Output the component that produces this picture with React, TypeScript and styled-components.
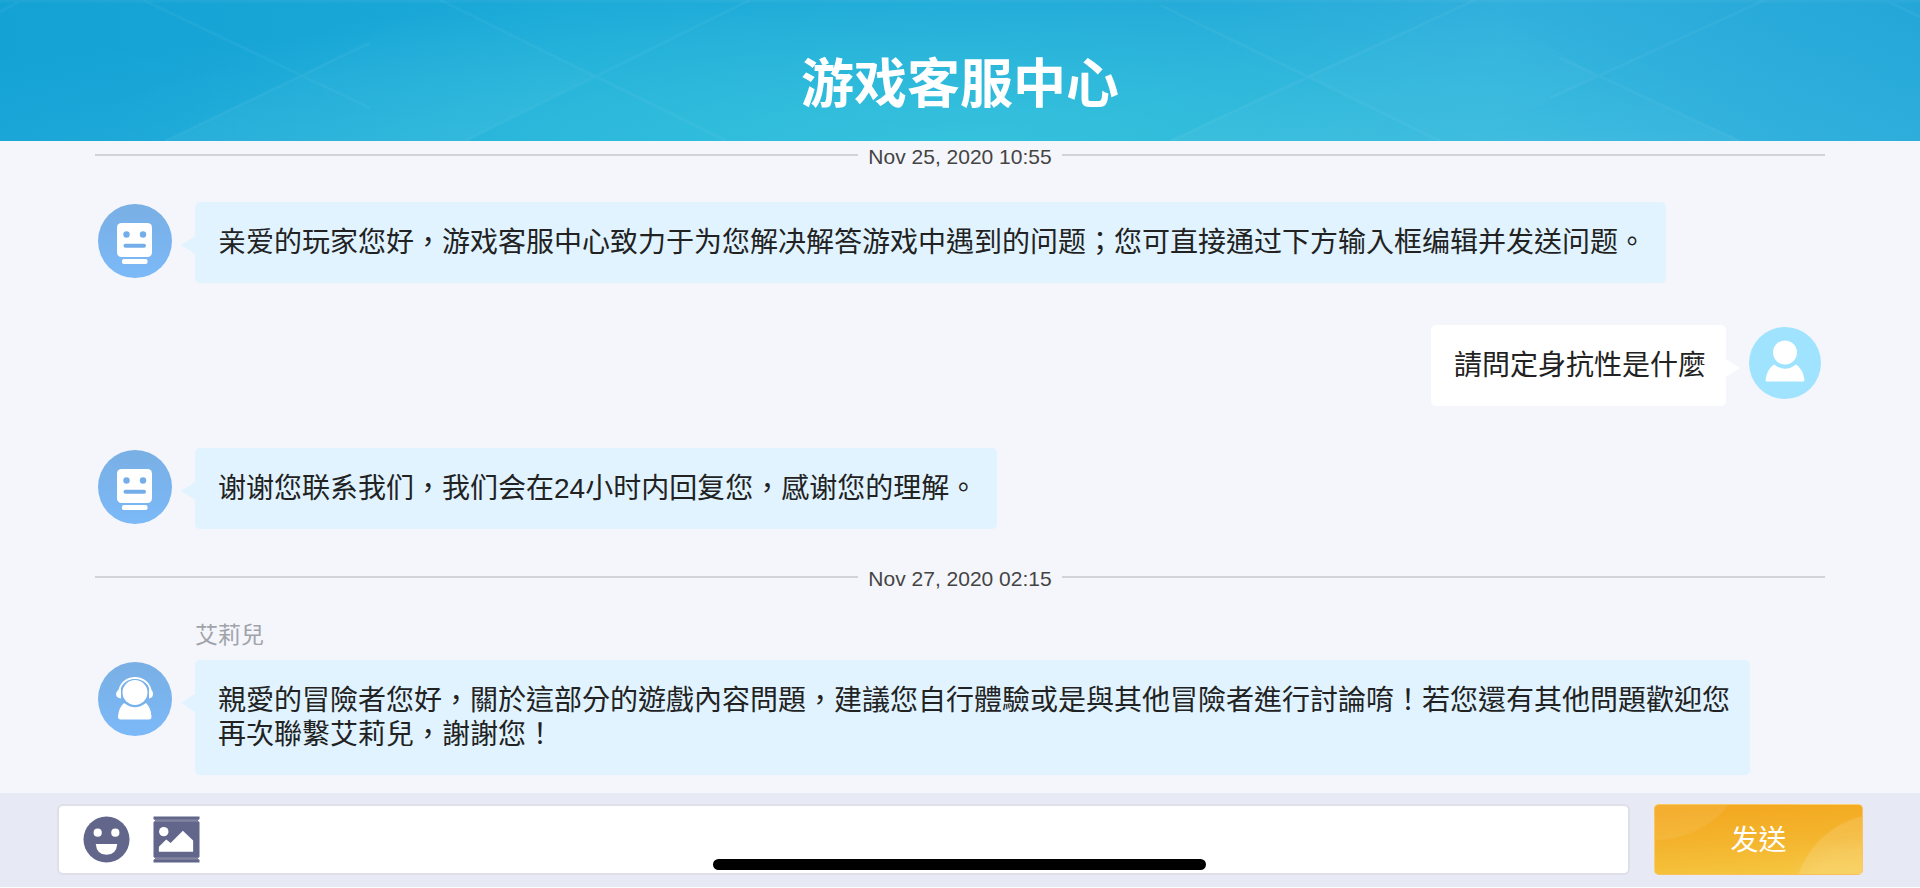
import React from "react";
import styled, { createGlobalStyle } from "styled-components";

const GlobalStyle = createGlobalStyle`
  *, *::before, *::after { box-sizing: border-box; }
  body {
    margin: 0;
    background: #f5f6fb;
    color: #222;
    font-family: "Liberation Sans", "Noto Sans CJK TC", sans-serif;
  }
`;

const Page = styled.div`
  display: flex;
  flex-direction: column;
  min-height: 100vh;
`;

const Header = styled.header`
  position: relative;
  display: flex;
  align-items: center;
  justify-content: center;
  height: 141px;
  padding-top: 18px;
  overflow: hidden;
  background:
    radial-gradient(ellipse 45% 120% at 50% 100%, rgba(54, 196, 220, 0.9), rgba(54, 196, 220, 0) 100%),
    linear-gradient(176deg, rgba(255, 255, 255, 0) 20%, rgba(90, 205, 235, 0.25) 100%),
    linear-gradient(90deg, #14a2d5 0%, #1ba9d8 30%, #20a6d8 62%, #2eaedc 78%, #1ea3d6 100%);
`;

const Facets = styled.svg`
  position: absolute;
  inset: 0;
  width: 100%;
  height: 100%;
`;

const Title = styled.h1`
  position: relative;
  margin: 0;
  color: #fff;
  font-family: "Noto Sans CJK SC", sans-serif;
  font-size: 53px;
  font-weight: 700;
  line-height: 64px;
`;

const Chat = styled.main`
  flex: 1;
  padding: 0 95px 18px;
`;

const Divider = styled.div`
  display: flex;
  align-items: center;
  gap: 10px;
  height: 28px;

  &::before,
  &::after {
    content: "";
    flex: 1;
    height: 2px;
    background: #d2d3d8;
  }
`;

const Time = styled.time`
  padding-top: 3px;
  color: #444;
  font-size: 21px;
  line-height: 28px;
`;

const Messages = styled.ul`
  display: flex;
  flex-direction: column;
  gap: 42px;
  margin: 0;
  padding: 33px 0 34px;
  list-style: none;

  &:last-child {
    padding: 27px 0 0;
  }
`;

const Row = styled.li<{ $mine?: boolean }>`
  display: flex;
  flex-direction: ${(p) => (p.$mine ? "row-reverse" : "row")};
  align-items: flex-start;
  gap: 23px;
  padding: ${(p) => (p.$mine ? "0 4px 0 75px" : "0 75px 0 3px")};
`;

const Avatar = styled.svg<{ $size: number }>`
  flex: none;
  width: ${(p) => p.$size}px;
  height: ${(p) => p.$size}px;
  margin-top: 2px;
`;

const Sender = styled.div`
  margin: 0 0 8px 100px;
  color: #a0a3aa;
  font-size: 23px;
  line-height: 34px;
`;

const Bubble = styled.p<{ $mine?: boolean }>`
  position: relative;
  margin: 0;
  padding: 24px 20px 23px 23px;
  border-radius: 5px;
  background: ${(p) => (p.$mine ? "#fff" : "#e0f3ff")};
  font-size: 28px;
  line-height: 34px;

  &::before {
    content: "";
    position: absolute;
    top: 34px;
    ${(p) => (p.$mine ? "left: 100%" : "right: 100%")};
    width: 14px;
    height: 18px;
    background: inherit;
    clip-path: ${(p) =>
      p.$mine ? "polygon(0 0, 100% 50%, 0 100%)" : "polygon(100% 0, 0 50%, 100% 100%)"};
  }
`;

const Composer = styled.form`
  position: relative;
  display: flex;
  gap: 24px;
  padding: 11px 57px 12px;
  border-bottom: 1px solid #fdfdff;
  background: #e7e9f5;
`;

const Field = styled.div`
  display: flex;
  flex: 1;
  align-items: center;
  gap: 23px;
  height: 71px;
  padding: 0 24px 1px;
  border: 2px solid #dedfe8;
  border-radius: 6px;
  background: #fff;
`;

const IconButton = styled.button`
  display: block;
  width: 47px;
  height: 47px;
  padding: 0;
  border: 0;
  background: none;
  cursor: pointer;

  svg {
    display: block;
    width: 100%;
    height: 100%;
  }
`;

const TextInput = styled.input`
  flex: 1;
  min-width: 0;
  height: 100%;
  padding: 0;
  border: 0;
  outline: 0;
  background: none;
  font: inherit;
  font-size: 28px;
`;

const SendButton = styled.button`
  width: 209px;
  height: 71px;
  padding: 0 0 4px;
  border: 1px solid rgba(255, 205, 120, 0.6);
  border-radius: 5px;
  background:
    radial-gradient(ellipse 76px 42px at 100% 105%, rgba(255, 255, 255, 0.07) 60%, transparent 100%),
    radial-gradient(circle 90px at 228px 98px, rgba(255, 255, 255, 0.13) 98%, transparent 100%),
    radial-gradient(circle 96px at 0 -60px, rgba(255, 255, 255, 0.07) 98%, transparent 100%),
    linear-gradient(176deg, #f3a921 10%, #f4b42d 50%, #f6c842 100%);
  color: #fff;
  font-family: "Noto Sans CJK SC", sans-serif;
  font-size: 28px;
  line-height: 34px;
  cursor: pointer;
`;

const HomeIndicator = styled.div`
  position: absolute;
  bottom: 17px;
  left: 50%;
  width: 493px;
  height: 11px;
  margin-left: -247px;
  border-radius: 6px;
  background: #000;
`;

type Kind = "bot" | "agent" | "player";

function AvatarIcon({ kind }: { kind: Kind }) {
  if (kind === "player") {
    return (
      <Avatar $size={72} viewBox="0 0 72 72" aria-label="玩家">
        <circle cx="36" cy="36" r="36" fill="#a0e3ff" />
        <circle cx="36" cy="25.500" r="12" fill="#fff" />
        <path d="M25 37.500Q36 46 47 37.500Q54 42 55.500 53Q55.500 54.500 54 54.500H18Q16.500 54.500 16.500 53Q18 42 25 37.500Z" fill="#fff" />
      </Avatar>
    );
  }
  return (
    <Avatar $size={74} viewBox="0 0 74 74" aria-label={kind === "bot" ? "机器人" : "客服"}>
      <defs>
        <linearGradient id={`avatar-${kind}`} x1="0" y1="0" x2="0" y2="1">
          <stop offset="0" stopColor="#79afe4" />
          <stop offset="1" stopColor="#7bb9f8" />
        </linearGradient>
      </defs>
      <circle cx="37" cy="37" r="37" fill={`url(#avatar-${kind})`} />
      {kind === "bot" ? (
        <>
          <rect x="19" y="19" width="35" height="34" rx="4.500" fill="#fff" />
          <rect x="24" y="55" width="25.500" height="5" rx="1.800" fill="#fff" />
          <g fill="#73aeea">
            <circle cx="28.500" cy="30.500" r="3.200" />
            <circle cx="45" cy="30.500" r="3.200" />
            <rect x="25.500" y="39.700" width="22.500" height="4" rx="2" />
          </g>
        </>
      ) : (
        <>
          <path d="M21 31C22 11 52 11 53 31" fill="none" stroke="#fff" strokeWidth="1.800" />
          <path d="M23 26.500V36.500Q18 36 18 31.500Q19 28 23 26.500Z" fill="#fff" />
          <path d="M51 26.500V36.500Q55 36 55 31.500Q55 28 51 26.500Z" fill="#fff" />
          <circle cx="37" cy="31" r="13.800" fill="#78b1eb" />
          <circle cx="37" cy="30.500" r="12.500" fill="#fff" />
          <path d="M26 41Q37 49.500 48 41Q53 46 53.500 54.500Q53.500 57.500 51 57.500H22.500Q20 57.500 20 54.500Q20.500 46 26 41Z" fill="#fff" />
        </>
      )}
    </Avatar>
  );
}

function Message({ kind, children }: { kind: Kind; children: React.ReactNode }) {
  const mine = kind === "player";
  return (
    <Row $mine={mine}>
      <AvatarIcon kind={kind} />
      <Bubble $mine={mine}>{children}</Bubble>
    </Row>
  );
}

function HeaderFacets() {
  return (
    <Facets viewBox="0 0 1920 141" preserveAspectRatio="none" aria-hidden="true">
      <defs>
        <linearGradient id="facet-fade" x1="0" y1="1" x2="0" y2="0">
          <stop offset="0" stopColor="#fff" stopOpacity="0.040" />
          <stop offset="1" stopColor="#fff" stopOpacity="0" />
        </linearGradient>
      </defs>
      <g fill="url(#facet-fade)">
        <path d="M300 76L440 0L594 76L465 141H165Z" />
        <path d="M1306 76L1475 0L1597 76L1470 141H1440Z" />
        <path d="M1306 76L1440 141H1170Z" />
        <path d="M1597 76L1740 141H1470Z" />
      </g>
      <g fill="none" stroke="#fff" strokeOpacity="0.040" strokeWidth="3">
        <path d="M143 0L370 108M370 43L165 141" />
        <path d="M440 0L727 141M750 0L465 141" />
        <path d="M1160 5L1440 141M1475 0L1170 141" />
        <path d="M1560 58L1740 141M1765 0L1550 98" />
        <path d="M0 12L22 0M1885 0L1920 17M0 1H1920" />
      </g>
    </Facets>
  );
}

export default function App() {
  return (
    <Page lang="zh-Hant">
      <GlobalStyle />
      <Header>
        <HeaderFacets />
        <Title lang="zh-Hans">游戏客服中心</Title>
      </Header>
      <Chat>
        <Divider>
          <Time dateTime="2020-11-25T10:55">Nov 25, 2020 10:55</Time>
        </Divider>
        <Messages>
          <Message kind="bot">
            亲爱的玩家您好，游戏客服中心致力于为您解决解答游戏中遇到的问题；您可直接通过下方输入框编辑并发送问题。
          </Message>
          <Message kind="player">請問定身抗性是什麼</Message>
          <Message kind="bot">谢谢您联系我们，我们会在24小时内回复您，感谢您的理解。</Message>
        </Messages>
        <Divider>
          <Time dateTime="2020-11-27T02:15">Nov 27, 2020 02:15</Time>
        </Divider>
        <Messages>
          <li>
            <Sender>艾莉兒</Sender>
            <Row as="div">
              <AvatarIcon kind="agent" />
              <Bubble>
                親愛的冒險者您好，關於這部分的遊戲內容問題，建議您自行體驗或是與其他冒險者進行討論唷！若您還有其他問題歡迎您再次聯繫艾莉兒，謝謝您！
              </Bubble>
            </Row>
          </li>
        </Messages>
      </Chat>
      <Composer onSubmit={(e) => e.preventDefault()}>
        <Field>
          <IconButton type="button" aria-label="表情">
            <svg viewBox="0 0 48 48">
              <circle cx="24" cy="24" r="23.500" fill="#61668a" />
              <g fill="#fff">
                <circle cx="15" cy="17" r="4.200" />
                <circle cx="33" cy="17" r="4.200" />
                <path d="M13 28.500H35Q34 39.500 24 39.500T13 28.500Z" />
              </g>
            </svg>
          </IconButton>
          <IconButton type="button" aria-label="图片">
            <svg viewBox="0 0 48 48">
              <path d="M.500 .500H47.500V3L45.500 4.500L47.500 6.500V41.500L45.500 43.500L47.500 45V47.500H.500V45L2.500 43.500L.500 41.500V6.500L2.500 4.500L.500 3Z" fill="#61668a" />
              <path d="M2 3.200H46V5.800H2ZM2 42.200H46V44.800H2Z" fill="#80849f" />
              <circle cx="11" cy="16" r="4.800" fill="#fff" />
              <path d="M6 36.500V31.500L13.500 24L18 27.500L30.500 15L41 25V36.500Z" fill="#fff" />
            </svg>
          </IconButton>
          <TextInput type="text" aria-label="输入消息" />
        </Field>
        <SendButton type="submit">发送</SendButton>
        <HomeIndicator />
      </Composer>
    </Page>
  );
}
